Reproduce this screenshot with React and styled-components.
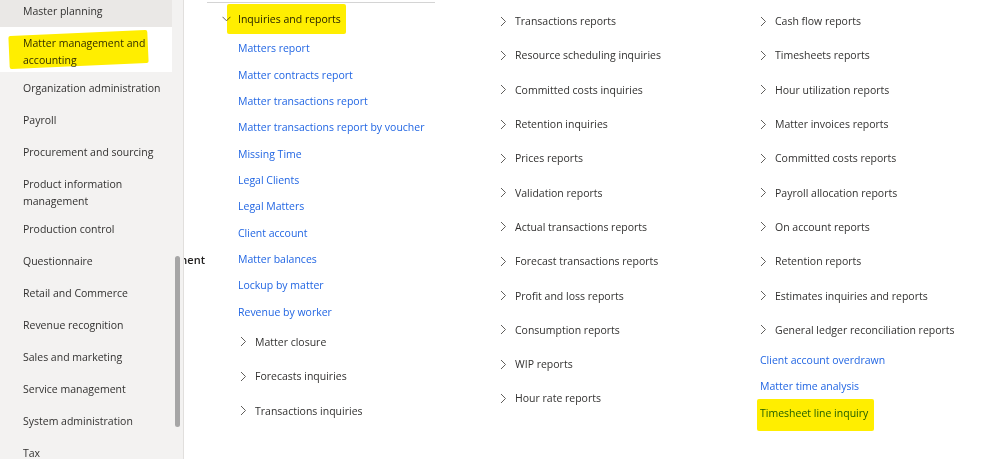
import React from "react";
import styled, { createGlobalStyle } from "styled-components";

const Global = createGlobalStyle`
  html, body { margin: 0; padding: 0; background: #fff; }
  body { font-family: "Segoe UI", "Open Sans", "Noto Sans", sans-serif; font-size: 10.5px; color: #323130; }
  * { box-sizing: border-box; }
`;

const Page = styled.div`
  position: relative;
  width: 1005px;
  height: 459px;
  overflow: hidden;
  background: #fff;
`;

const Workspace = styled.div`
  display: grid;
  grid-template-columns: 214px 280px 260px 1fr;
  height: 100%;
`;

const TitleCol = styled.div`
  padding-top: 252px;
  padding-right: 9px;
  text-align: right;
  font-weight: 600;
  font-size: 11px;
  color: #201f1e;
  white-space: nowrap;
`;

const Column = styled.div`
  display: flex;
  flex-direction: column;
  padding-top: ${(p) => p.$top || 0}px;
`;

const TopRule = styled.div`
  margin-left: -7px;
  width: 228px;
  height: 0;
  border-top: 1.5px solid #d4d4d4;
  margin-top: 2px;
`;

const Heading = styled.div`
  position: relative;
  display: flex;
  align-items: center;
  height: 32px;
  padding-left: 8px;
  gap: 7px;
  color: #201f1e;
`;

const LinkRow = styled.div`
  position: relative;
  display: flex;
  align-items: center;
  flex: none;
  height: 26.35px;
  padding-left: ${(p) => p.$indent}px;
  color: #2266e3;
  white-space: nowrap;
`;

const GroupRow = styled.div`
  display: flex;
  align-items: center;
  flex: none;
  height: 34.3px;
  padding-left: ${(p) => p.$indent}px;
  color: #323130;
  white-space: nowrap;
`;

const ChevronBox = styled.span`
  display: inline-flex;
  width: 15px;
  flex: none;
`;

const Mark = styled.span`
  position: absolute;
  background: #ffee00;
  mix-blend-mode: multiply;
  pointer-events: none;
  border-radius: 2px;
  transform: ${(p) => (p.$tilt ? `rotate(${p.$tilt}deg)` : "none")};
`;

const Sidebar = styled.aside`
  position: absolute;
  left: 0;
  top: 0;
  width: 184px;
  height: 100%;
  display: flex;
  background: #f3f2f1;
  border-right: 1px solid #e1dfdd;
  z-index: 2;
`;

const NavList = styled.div`
  width: 172px;
  margin-top: -5px;
  display: flex;
  flex-direction: column;
`;

const NavItem = styled.div`
  position: relative;
  display: flex;
  align-items: center;
  flex: none;
  min-height: 32px;
  padding: ${(p) => (p.$double ? "8px 4px 3px 23px" : "6px 4px 6px 23px")};
  line-height: 17px;
  color: #323130;
  background: ${(p) => (p.$selected ? "#ffffff" : p.$hover ? "#eae8e6" : "transparent")};
`;

const Track = styled.div`
  flex: 1;
  padding: 256px 0 0 3px;
`;

const Thumb = styled.div`
  width: 5px;
  height: 171px;
  border-radius: 3px;
  background: #a6a6a6;
`;

const ChevronRight = () => (
  <ChevronBox>
    <svg width="7" height="11" viewBox="0 0 7 11">
      <path d="M1 1 L5.5 5.5 L1 10" fill="none" stroke="#605e5c" strokeWidth="1" />
    </svg>
  </ChevronBox>
);

const ChevronDown = () => (
  <svg width="9" height="6" viewBox="0 0 9 6" style={{ flex: "none" }}>
    <path d="M0.5 0.8 L4.5 4.8 L8.5 0.8" fill="none" stroke="#605e5c" strokeWidth="1" />
  </svg>
);

const navItems = [
  { t: "Master planning" },
  { t: "Matter management and accounting", double: true },
  { t: "Organization administration" },
  { t: "Payroll" },
  { t: "Procurement and sourcing" },
  { t: "Product information management", double: true },
  { t: "Production control" },
  { t: "Questionnaire" },
  { t: "Retail and Commerce" },
  { t: "Revenue recognition" },
  { t: "Sales and marketing" },
  { t: "Service management" },
  { t: "System administration" },
  { t: "Tax" },
];

const col1Links = [
  "Matters report",
  "Matter contracts report",
  "Matter transactions report",
  "Matter transactions report by voucher",
  "Missing Time",
  "Legal Clients",
  "Legal Matters",
  "Client account",
  "Matter balances",
  "Lockup by matter",
  "Revenue by worker",
];
const col1Groups = ["Matter closure", "Forecasts inquiries", "Transactions inquiries"];

const col2Groups = [
  "Transactions reports",
  "Resource scheduling inquiries",
  "Committed costs inquiries",
  "Retention inquiries",
  "Prices reports",
  "Validation reports",
  "Actual transactions reports",
  "Forecast transactions reports",
  "Profit and loss reports",
  "Consumption reports",
  "WIP reports",
  "Hour rate reports",
];

const col3Groups = [
  "Cash flow reports",
  "Timesheets reports",
  "Hour utilization reports",
  "Matter invoices reports",
  "Committed costs reports",
  "Payroll allocation reports",
  "On account reports",
  "Retention reports",
  "Estimates inquiries and reports",
  "General ledger reconciliation reports",
];
const col3Links = ["Client account overdrawn", "Matter time analysis", "Timesheet line inquiry"];

export default function App() {
  return (
    <>
      <Global />
      <Page>
        <Workspace>
          <TitleCol>Matter management</TitleCol>
          <Column>
            <TopRule />
            <Heading>
              <Mark style={{ left: 13, top: 1, width: 119, height: 30 }} />
              <ChevronDown />
              <span>Inquiries and reports</span>
            </Heading>
            {col1Links.map((t) => (
              <LinkRow key={t} $indent={24}>{t}</LinkRow>
            ))}
            {col1Groups.map((t) => (
              <GroupRow key={t} $indent={26}>
                <ChevronRight />
                {t}
              </GroupRow>
            ))}
          </Column>
          <Column $top={4}>
            {col2Groups.map((t) => (
              <GroupRow key={t} $indent={6}>
                <ChevronRight />
                {t}
              </GroupRow>
            ))}
          </Column>
          <Column $top={4}>
            {col3Groups.map((t) => (
              <GroupRow key={t} $indent={6}>
                <ChevronRight />
                {t}
              </GroupRow>
            ))}
            {col3Links.map((t, i) => (
              <LinkRow key={t} $indent={6}>
                {i === 2 && <Mark style={{ left: 3, top: -1, width: 117, height: 32 }} />}
                {t}
              </LinkRow>
            ))}
          </Column>
        </Workspace>

        <Sidebar>
          <NavList>
            {navItems.map((n, i) => (
              <NavItem key={n.t} $double={n.double} $hover={i === 0} $selected={i === 1}>
                {i === 1 && <Mark $tilt={-2.5} style={{ left: 9, top: 6, width: 139, height: 33 }} />}
                {n.t}
              </NavItem>
            ))}
          </NavList>
          <Track>
            <Thumb />
          </Track>
        </Sidebar>
      </Page>
    </>
  );
}
